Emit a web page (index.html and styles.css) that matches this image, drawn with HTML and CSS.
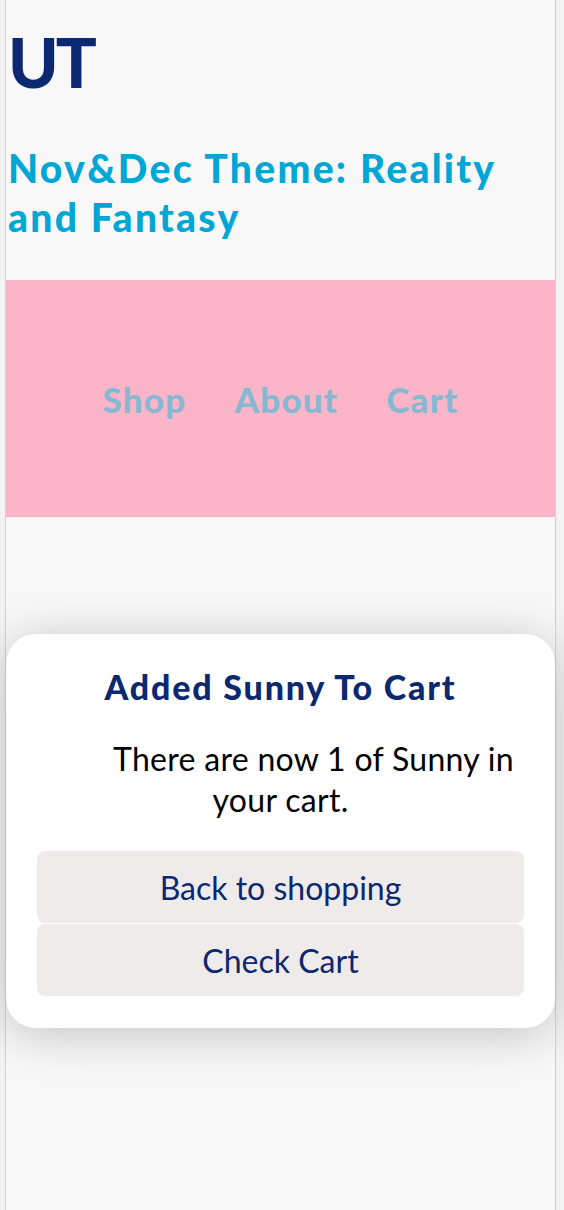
FILE: index.html
```html
<!DOCTYPE html>
<html lang="en">
<head>
<meta charset="utf-8">
<title>UT Shop</title>
<link rel="stylesheet" href="styles.css">
</head>
<body>
<div class="page">
  <header class="header">
    <h1 class="logo">UT</h1>
    <h2 class="theme">Nov&amp;Dec Theme: Reality and Fantasy</h2>
  </header>
  <nav class="nav">
    <a class="nav-link" href="#">Shop</a>
    <a class="nav-link" href="#">About</a>
    <a class="nav-link" href="#">Cart</a>
  </nav>
  <div class="modal">
    <h3 class="modal-title">Added Sunny To Cart</h3>
    <p class="modal-text">There are now 1 of Sunny in your cart.</p>
    <div class="modal-actions">
      <button class="btn">Back to shopping</button>
      <button class="btn">Check Cart</button>
    </div>
  </div>
</div>
</body>
</html>
```
FILE: styles.css
```css
html {
  background: #f3f3f3;
}
body {
  margin: 0;
  font-family: "Lato", "Noto Sans", sans-serif;
}
.page {
  margin-left: 5px;
  width: 551px;
  min-height: 1210px;
  box-sizing: border-box;
  background: #f8f8f8;
  border-left: 1px solid #d2d2d2;
  border-right: 1px solid #d2d2d2;
  display: flex;
  flex-direction: column;
}
.header {
  padding: 0 2px;
}
.logo {
  margin: 22px 0 0;
  font-size: 68px;
  line-height: 80px;
  font-weight: 900;
  letter-spacing: -3px;
  color: #0b2870;
}
.theme {
  margin: 42px 0 0;
  font-size: 39px;
  line-height: 49px;
  font-weight: 900;
  letter-spacing: 2.3px;
  color: #00a6d6;
}
.nav {
  margin-top: 38px;
  height: 237px;
  background: #fcb4c8;
  display: flex;
  justify-content: center;
  align-items: center;
  gap: 48px;
}
.nav-link {
  font-size: 35px;
  font-weight: 900;
  letter-spacing: 1.2px;
  color: #86b9d1;
  text-decoration: none;
}
.modal {
  margin-top: 117px;
  height: 394px;
  box-sizing: border-box;
  background: #fff;
  border-radius: 30px;
  box-shadow: 0 6px 50px rgba(0, 0, 0, 0.22);
  padding-top: 30px;
}
.modal-title {
  margin: 0;
  text-align: center;
  font-size: 34px;
  line-height: 46px;
  font-weight: 900;
  letter-spacing: 1.8px;
  color: #0b2870;
}
.modal-text {
  margin: 28px 0 0;
  padding: 0 24px;
  text-indent: 66px;
  text-align: center;
  font-size: 32px;
  line-height: 41px;
  letter-spacing: 0.3px;
  color: #000;
}
.modal-actions {
  margin: 31px 31px 0;
  display: flex;
  flex-direction: column;
  gap: 1px;
}
.btn {
  height: 72px;
  border: none;
  border-radius: 8px;
  background: #efebeb;
  font-family: inherit;
  font-size: 32px;
  color: #0b2870;
}
```
